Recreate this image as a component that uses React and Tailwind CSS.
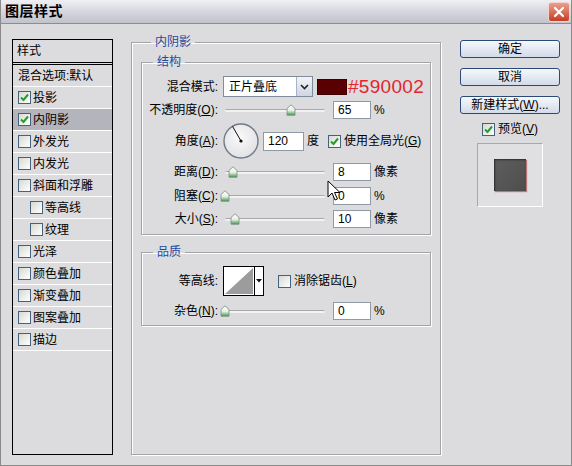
import React from 'react';

const FONT = { fontFamily: '"Liberation Sans", "Noto Sans CJK SC", sans-serif' };

const Check = ({ checked }) => (
  <span className="inline-flex w-[13px] h-[13px] shrink-0 items-center justify-center border border-[#44617e] bg-linear-to-br from-[#d8d8d2] to-white">
    {checked && (
      <svg width="9" height="9" viewBox="0 0 9 9">
        <path d="M1 4.5 L3.5 7 L8 1.5" stroke="#21a121" strokeWidth="2" fill="none" />
      </svg>
    )}
  </span>
);

const Key = ({ children }) => <span className="underline">{children}</span>;

const Label = ({ children }) => (
  <div className="w-[76px] shrink-0 text-right whitespace-nowrap">{children}</div>
);

const Thumb = () => (
  <svg width="10" height="12" viewBox="0 0 10 12">
    <defs>
      <linearGradient id="tg" x1="0" y1="0" x2="0" y2="1">
        <stop offset="0" stopColor="#ffffff" />
        <stop offset="0.55" stopColor="#e6efe6" />
        <stop offset="1" stopColor="#3c9a4c" />
      </linearGradient>
    </defs>
    <path d="M1 4.5 L5 0.8 L9 4.5 V11.2 H1 Z" fill="url(#tg)" stroke="#7b8a7b" strokeWidth="0.8" />
  </svg>
);

const Slider = ({ pos }) => (
  <div className="relative ml-[2px] w-[100px] h-[18px] shrink-0">
    <div className="absolute left-0 right-0 top-[8px] h-[3px] border-t border-[#a9a9a9] bg-[#f2f2f2] rounded-full" />
    <div className="absolute top-[3px]" style={{ left: pos - 5 }}>
      <Thumb />
    </div>
  </div>
);

const Input = ({ value, w = 'w-[38px]', h = 'h-[18px]' }) => (
  <div className={`${w} ${h} shrink-0 border border-[#8e9aa6] bg-white pl-[4px] flex items-center text-[12px]`}>
    {value}
  </div>
);

const SliderRow = ({ label, pos, value, unit, mt }) => (
  <div className={`flex items-center h-[18px] ${mt}`}>
    <Label>{label}</Label>
    <div className="ml-[5px] flex items-center">
      <Slider pos={pos} />
      <div className="ml-[8px]">
        <Input value={value} />
      </div>
      <span className="ml-[3px]">{unit}</span>
    </div>
  </div>
);

const Button = ({ children }) => (
  <div className="h-[18px] w-[100px] rounded-[3px] border border-[#2c4a78] bg-linear-to-b from-[#f6f8fc] to-[#d2dbe9] flex items-center justify-center text-[12px]">
    {children}
  </div>
);

const listItems = [
  { t: '混合选项:默认', cb: false, noCb: true },
  { t: '投影', cb: true },
  { t: '内阴影', cb: true, sel: true },
  { t: '外发光' },
  { t: '内发光' },
  { t: '斜面和浮雕' },
  { t: '等高线', indent: true },
  { t: '纹理', indent: true },
  { t: '光泽' },
  { t: '颜色叠加' },
  { t: '渐变叠加' },
  { t: '图案叠加' },
  { t: '描边' },
];

export default function App() {
  return (
    <div className="relative w-[572px] h-[466px] overflow-hidden bg-[#dcdcde] text-[12px] text-black border-x border-b border-[#8a8a8a]" style={FONT}>
      {/* Title bar */}
      <div className="h-[24px] flex items-center justify-between border-b border-[#8c8c96] bg-linear-to-b from-[#f0f0f4] via-[#d6d6de] to-[#c2c2cd] pl-[4px] pr-[1px]">
        <span className="text-[14px] font-bold tracking-[0.5px]">图层样式</span>
        <div className="w-[22px] h-[20px] rounded-[3px] border border-[#f4d4cc] bg-linear-to-b from-[#e9a08c] to-[#c53a25] flex items-center justify-center">
          <svg width="12" height="12" viewBox="0 0 12 12">
            <path d="M2 2 L10 10 M10 2 L2 10" stroke="#fff" strokeWidth="2.2" strokeLinecap="round" />
          </svg>
        </div>
      </div>

      <div className="flex items-start">
        {/* Styles list */}
        <div className="ml-[11px] mt-[15px] w-[101px] h-[416px] border border-black">
          <div className="h-[25px] pl-[4px] flex items-center border-b-[3px] border-double border-black">样式</div>
          {listItems.map((it) => (
            <div
              key={it.t}
              className={`h-[22px] flex items-center border-b border-white ${it.sel ? 'bg-[#b4b4bc]' : ''} ${it.indent ? 'pl-[17px]' : 'pl-[5px]'}`}
            >
              {!it.noCb && <Check checked={it.cb} />}
              <span className={it.noCb ? 'pl-0' : 'pl-[2px]'}>{it.t}</span>
            </div>
          ))}
        </div>

        {/* Inner shadow group */}
        <fieldset className="ml-[18px] mt-[10px] w-[310px] h-[421px] border border-[#a4a4a8] px-[9px] shadow-[inset_1px_1px_0_#fff,1px_1px_0_#fff]">
          <legend className="ml-[10px] px-[4px] text-[#1e4a9e] leading-[16px]">内阴影</legend>

          <fieldset className="mt-[4px] border border-[#a4a4a8] pb-[6px] shadow-[inset_1px_1px_0_#fff,1px_1px_0_#fff]">
            <legend className="ml-[11px] px-[4px] text-[#1e4a9e] leading-[16px]">结构</legend>

            <div className="flex items-center h-[21px] mt-[6px]">
              <Label>混合模式:</Label>
              <div className="ml-[5px] flex items-center">
                <div className="w-[90px] h-[21px] border border-[#7f8c9a] bg-white flex items-center">
                  <span className="flex-1 pl-[5px]">正片叠底</span>
                  <div className="w-[16px] h-[19px] border-l border-[#a8b4c4] bg-linear-to-b from-[#f2f4f8] to-[#cfd6e2] flex items-center justify-center">
                    <svg width="9" height="6" viewBox="0 0 9 6">
                      <path d="M1 1 L4.5 4.5 L8 1" stroke="#222" strokeWidth="1.6" fill="none" />
                    </svg>
                  </div>
                </div>
                <div className="ml-[4px] w-[30px] h-[16px] bg-[#590002] border border-[#3a0000]" />
                <span className="ml-[1px] text-[19px] leading-[20px] text-[#e3262c] tracking-[0.3px]">#590002</span>
              </div>
            </div>

            <SliderRow label={<>不透明度(<Key>O</Key>):</>} pos={66} value="65" unit="%" mt="mt-[4px]" />

            <div className="flex items-center h-[36px] mt-[4px]">
              <Label>角度(<Key>A</Key>):</Label>
              <div className="ml-[5px] flex items-center">
                <svg width="36" height="36" viewBox="0 0 36 36">
                  <defs>
                    <radialGradient id="dial" cx="0.45" cy="0.4" r="0.6">
                      <stop offset="0" stopColor="#fafafa" />
                      <stop offset="1" stopColor="#e2e2e6" />
                    </radialGradient>
                  </defs>
                  <circle cx="18" cy="18" r="17" fill="url(#dial)" stroke="#6f7a88" strokeWidth="1.4" />
                  <path d="M18 18 L9.5 3.3" stroke="#111" strokeWidth="1" />
                  <circle cx="18" cy="18" r="1.6" fill="#111" />
                </svg>
                <div className="ml-[4px]">
                  <Input value="120" w="w-[41px]" h="h-[19px]" />
                </div>
                <span className="ml-[3px]">度</span>
                <div className="ml-[9px] flex items-center">
                  <Check checked />
                  <span className="ml-[3px]">使用全局光(<Key>G</Key>)</span>
                </div>
              </div>
            </div>

            <SliderRow label={<>距离(<Key>D</Key>):</>} pos={8} value="8" unit="像素" mt="mt-[4px]" />
            <SliderRow label={<>阻塞(<Key>C</Key>):</>} pos={0} value="0" unit="%" mt="mt-[6px]" />
            <SliderRow label={<>大小(<Key>S</Key>):</>} pos={10} value="10" unit="像素" mt="mt-[5px]" />
          </fieldset>

          <fieldset className="mt-[9px] border border-[#a4a4a8] pb-[5px] shadow-[inset_1px_1px_0_#fff,1px_1px_0_#fff]">
            <legend className="ml-[11px] px-[4px] text-[#1e4a9e] leading-[16px]">品质</legend>

            <div className="flex items-center h-[30px] mt-[6px]">
              <Label>等高线:</Label>
              <div className="ml-[5px] flex items-center">
                <div className="w-[41px] h-[30px] border border-black bg-white flex">
                  <svg width="30" height="28" viewBox="0 0 30 28">
                    <path d="M1 27 L29 1 V27 Z" fill="#9c9c9c" />
                  </svg>
                  <div className="flex-1 border-l border-black flex items-center justify-center">
                    <svg width="6" height="4" viewBox="0 0 6 4">
                      <path d="M0 0 H6 L3 3.5 Z" fill="#111" />
                    </svg>
                  </div>
                </div>
                <div className="ml-[14px] flex items-center">
                  <Check />
                  <span className="ml-[3px]">消除锯齿(<Key>L</Key>)</span>
                </div>
              </div>
            </div>

            <SliderRow label={<>杂色(<Key>N</Key>):</>} pos={0} value="0" unit="%" mt="mt-[6px]" />
          </fieldset>
        </fieldset>

        {/* Buttons */}
        <div className="ml-[19px] mt-[16px] w-[100px] flex flex-col items-center">
          <Button>确定</Button>
          <div className="mt-[10px]"><Button>取消</Button></div>
          <div className="mt-[10px]"><Button>新建样式(<Key>W</Key>)...</Button></div>
          <div className="mt-[7px] h-[16px] flex items-center">
            <Check checked />
            <span className="ml-[3px]">预览(<Key>V</Key>)</span>
          </div>
          <div className="mt-[6px] w-[66px] h-[64px] bg-[#e0e0e2] border border-t-[#a8a8ac] border-l-[#a8a8ac] border-r-white border-b-white flex items-center justify-center">
            <div className="w-[32px] h-[32px] bg-linear-to-br from-[#5e5e5e] to-[#4e4e4e] shadow-[inset_1px_1px_2px_#2a2a2a,1px_1px_1px_#b87878]" />
          </div>
        </div>
      </div>

      {/* Mouse cursor */}
      <svg className="absolute left-[326px] top-[180px]" width="14" height="22" viewBox="0 0 14 22">
        <path d="M1 1 L1 17 L5 13 L8 20 L10.5 19 L7.5 12.5 L13 12.5 Z" fill="#fff" stroke="#000" strokeWidth="1" strokeLinejoin="round" />
      </svg>
    </div>
  );
}
